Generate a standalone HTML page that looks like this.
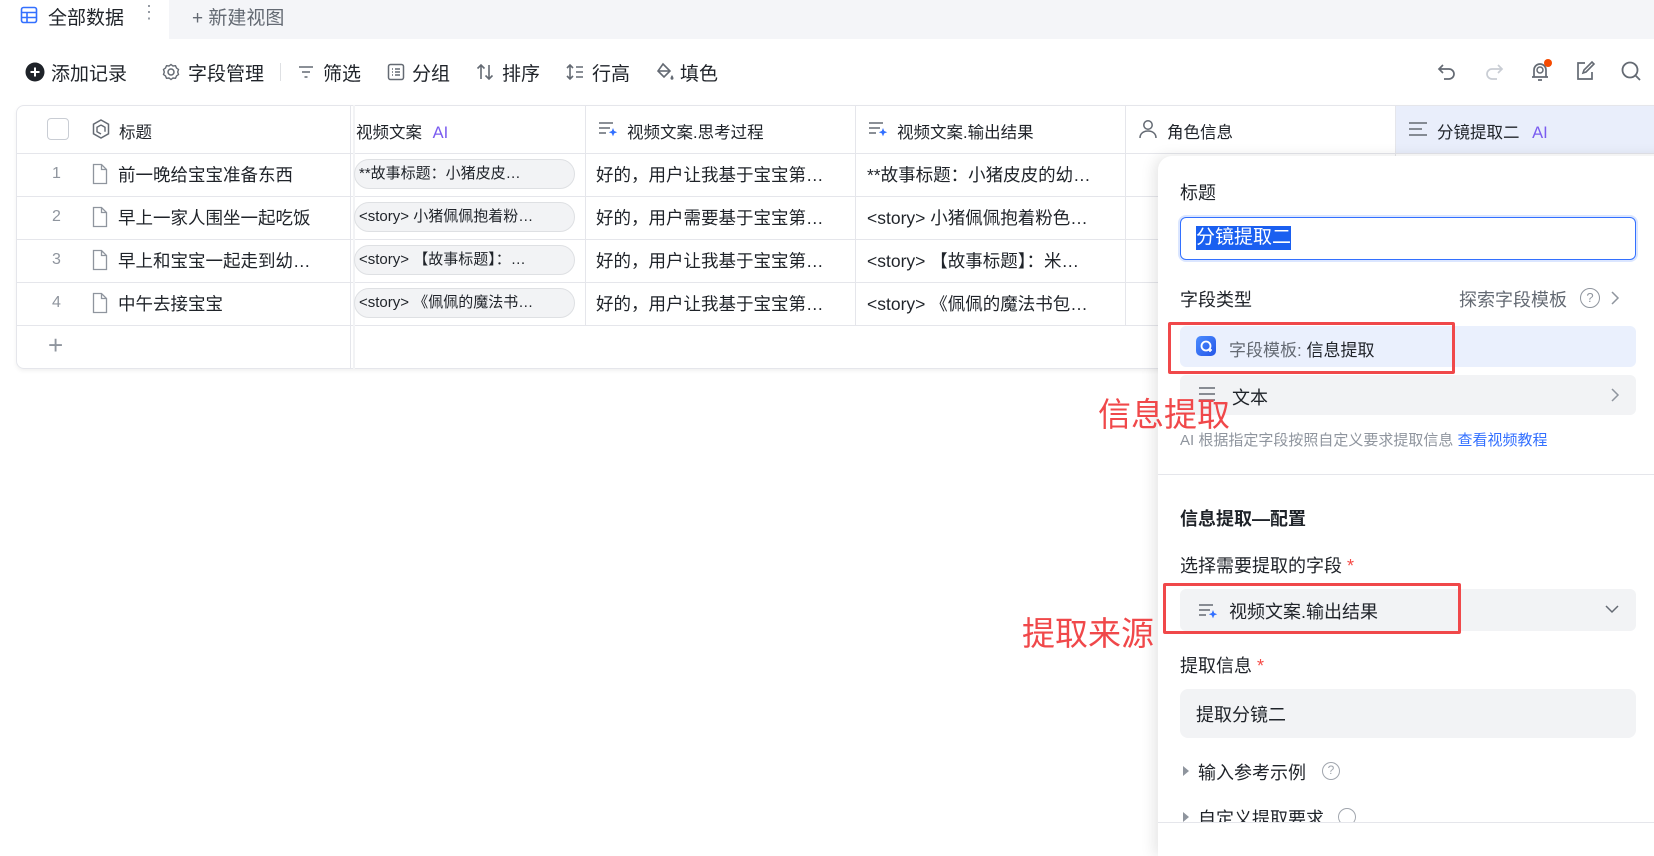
<!DOCTYPE html>
<html><head><meta charset="utf-8"><style>
*{box-sizing:border-box;margin:0;padding:0}
body{width:1654px;height:840px;overflow:hidden;background:#fff;font-family:"Liberation Sans","Noto Sans CJK SC",sans-serif;color:#1f2329;position:relative}
.a{position:absolute;white-space:nowrap}
svg{position:absolute}
.tb{font-size:19px;top:59px;color:#1f2329}
.hd{font-size:16.5px;top:119px;color:#1f2329}
.cell{font-size:17.5px;color:#1f2329}
.pill{position:absolute;left:354px;width:221px;height:30px;border:1px solid #dee0e3;background:#f2f3f5;border-radius:15px;font-size:15px;line-height:28px;padding-left:4px;overflow:hidden;white-space:nowrap}
.hl{position:absolute;left:16px;height:1px;background:#e5e6eb}
.vl{position:absolute;top:105px;width:1px;height:220px;background:#e5e6eb}
.lbl{font-size:18px;color:#1f2329}
</style></head><body>
<!-- tab bar -->
<div class="a" style="left:0;top:0;width:1654px;height:39px;background:#f4f5f8"></div>
<div class="a" style="left:0;top:0;width:169px;height:39px;background:#fff"></div>
<svg style="left:20px;top:6px" width="18" height="18" viewBox="0 0 18 18"><rect x="1.5" y="1.5" width="15" height="15" rx="2" fill="none" stroke="#3370ff" stroke-width="1.6"/><path d="M1.5 6.5h15M1.5 11.5h15M7 6.5v10" stroke="#3370ff" stroke-width="1.6"/></svg>
<div class="a" style="left:48px;top:3px;font-size:19px">全部数据</div>
<div class="a" style="left:140px;top:2px;font-size:18px;color:#8f959e">⋮</div>
<div class="a" style="left:192px;top:3px;font-size:19px;color:#646a73">+ 新建视图</div>
<!-- toolbar -->
<svg style="left:25px;top:62px" width="20" height="20" viewBox="0 0 20 20"><circle cx="10" cy="10" r="9.5" fill="#1f2329"/><path d="M10 5.5v9M5.5 10h9" stroke="#fff" stroke-width="2"/></svg>
<div class="a tb" style="left:51px">添加记录</div>
<svg style="left:162px;top:63px" width="18" height="18" viewBox="0 0 18 18"><circle cx="9" cy="9" r="3" fill="none" stroke="#646a73" stroke-width="1.5"/><path d="M9 1.5l2 1.5 2.5-.3 1 2.3 2 1.5-.8 2.5.8 2.5-2 1.5-1 2.3-2.5-.3-2 1.5-2-1.5-2.5.3-1-2.3-2-1.5.8-2.5-.8-2.5 2-1.5 1-2.3 2.5.3z" fill="none" stroke="#646a73" stroke-width="1.4"/></svg>
<div class="a tb" style="left:188px">字段管理</div>
<div class="a" style="left:280px;top:63px;width:1px;height:18px;background:#dee0e3"></div>
<svg style="left:297px;top:63px" width="18" height="18" viewBox="0 0 18 18"><path d="M2 4h14M5 9h8M7.5 14h3" stroke="#646a73" stroke-width="1.6"/></svg>
<div class="a tb" style="left:323px">筛选</div>
<svg style="left:387px;top:63px" width="18" height="18" viewBox="0 0 18 18"><rect x="1.5" y="1.5" width="15" height="15" rx="2" fill="none" stroke="#646a73" stroke-width="1.5"/><path d="M5 6h1M5 9h1M5 12h1M8 6h5M8 9h5M8 12h5" stroke="#646a73" stroke-width="1.5"/></svg>
<div class="a tb" style="left:412px">分组</div>
<svg style="left:475px;top:62px" width="20" height="20" viewBox="0 0 20 20"><path d="M6 17V3M2.5 6.5L6 3l3.5 3.5M14 3v14M10.5 13.5L14 17l3.5-3.5" fill="none" stroke="#646a73" stroke-width="1.6"/></svg>
<div class="a tb" style="left:502px">排序</div>
<svg style="left:565px;top:62px" width="20" height="20" viewBox="0 0 20 20"><path d="M5 3v14M2 6l3-3 3 3M2 14l3 3 3-3M11 5h7M11 10h7M11 15h7" fill="none" stroke="#646a73" stroke-width="1.6"/></svg>
<div class="a tb" style="left:592px">行高</div>
<svg style="left:654px;top:61px" width="22" height="22" viewBox="0 0 22 22"><path d="M9 3l7 7-6 6-6-6z" fill="none" stroke="#646a73" stroke-width="1.6"/><path d="M4 10h12" stroke="#646a73" stroke-width="1.6"/><path d="M18 14c1 1.5 1.5 2.5 1.5 3.2a1.5 1.5 0 01-3 0c0-.7.5-1.7 1.5-3.2z" fill="#646a73"/></svg>
<div class="a tb" style="left:680px">填色</div>
<!-- right icons -->
<svg style="left:1436px;top:61px" width="22" height="22" viewBox="0 0 22 22"><path d="M7 4L3 8l4 4M3 8h10a5 5 0 010 10H8" fill="none" stroke="#646a73" stroke-width="1.7"/></svg>
<svg style="left:1483px;top:61px" width="22" height="22" viewBox="0 0 22 22"><path d="M15 4l4 4-4 4M19 8H9a5 5 0 000 10h5" fill="none" stroke="#c9cdd4" stroke-width="1.7"/></svg>
<svg style="left:1528px;top:58px" width="26" height="26" viewBox="0 0 26 26"><path d="M6 19V12a6 6 0 0112 0v7M4 19h16M10 22h4" fill="none" stroke="#646a73" stroke-width="1.7"/><circle cx="12" cy="12" r="3" fill="none" stroke="#646a73" stroke-width="1.5"/><circle cx="20" cy="5" r="4" fill="#f54a00"/></svg>
<svg style="left:1574px;top:60px" width="22" height="22" viewBox="0 0 22 22"><path d="M11 3H4v16h14v-7" fill="none" stroke="#646a73" stroke-width="1.7"/><path d="M9 13l1-3 8-8 2 2-8 8z" fill="none" stroke="#646a73" stroke-width="1.6"/></svg>
<svg style="left:1620px;top:60px" width="22" height="22" viewBox="0 0 22 22"><circle cx="10" cy="10" r="7.5" fill="none" stroke="#646a73" stroke-width="1.8"/><path d="M15.5 15.5L20 20" stroke="#646a73" stroke-width="1.8"/></svg>
<!-- table -->
<div class="a" style="left:16px;top:105px;width:1650px;height:264px;border:1px solid #e5e6eb;border-radius:8px;box-shadow:0 2px 4px rgba(0,0,0,.06)"></div>
<div class="a" style="left:1395px;top:106px;width:259px;height:47px;background:#e9eefb"></div>
<div class="hl" style="top:153px;width:1638px"></div>
<div class="hl" style="top:196px;width:1638px"></div>
<div class="hl" style="top:239px;width:1638px"></div>
<div class="hl" style="top:282px;width:1638px"></div>
<div class="hl" style="top:325px;width:1638px"></div>
<div class="a" style="left:350px;top:105px;width:1px;height:264px;background:#e5e6eb"></div>
<div class="a" style="left:353px;top:105px;width:2px;height:264px;background:#f2f3f5"></div>
<div class="vl" style="left:585px"></div><div class="vl" style="left:855px"></div><div class="vl" style="left:1125px"></div><div class="vl" style="left:1395px"></div>
<div class="a" style="left:47px;top:118px;width:22px;height:22px;border:1.5px solid #c9cdd4;border-radius:4px"></div>
<svg style="left:92px;top:119px" width="18" height="20" viewBox="0 0 18 20"><path d="M9 1l7.5 4.2v9.6L9 19l-7.5-4.2V5.2z" fill="none" stroke="#646a73" stroke-width="1.5"/><path d="M9 6l4 2.3v4.4M9 6L5 8.3v4.4L9 15" fill="none" stroke="#646a73" stroke-width="1.4"/></svg>
<div class="a hd" style="left:119px">标题</div>
<div class="a hd" style="left:356px">视频文案 <span style="color:#7a5cf0;margin-left:6px">AI</span></div>
<svg style="left:598px;top:120px" width="20" height="18" viewBox="0 0 20 18"><path d="M1 3h14M1 8h11M1 13h7" stroke="#646a73" stroke-width="1.6"/><path d="M15 8l1.2 3 3 1.2-3 1.2-1.2 3-1.2-3-3-1.2 3-1.2z" fill="#3370ff"/></svg>
<div class="a hd" style="left:627px">视频文案.思考过程</div>
<svg style="left:868px;top:120px" width="20" height="18" viewBox="0 0 20 18"><path d="M1 3h14M1 8h11M1 13h7" stroke="#646a73" stroke-width="1.6"/><path d="M15 8l1.2 3 3 1.2-3 1.2-1.2 3-1.2-3-3-1.2 3-1.2z" fill="#3370ff"/></svg>
<div class="a hd" style="left:897px">视频文案.输出结果</div>
<svg style="left:1138px;top:119px" width="20" height="20" viewBox="0 0 20 20"><circle cx="10" cy="6" r="4.2" fill="none" stroke="#646a73" stroke-width="1.5"/><path d="M2 19c0-4.5 3.5-7 8-7s8 2.5 8 7" fill="none" stroke="#646a73" stroke-width="1.5"/></svg>
<div class="a hd" style="left:1167px">角色信息</div>
<svg style="left:1408px;top:121px" width="20" height="16" viewBox="0 0 20 16"><path d="M1 2h18M1 8h13M1 14h18" stroke="#646a73" stroke-width="1.6"/></svg>
<div class="a hd" style="left:1437px">分镜提取二 <span style="color:#7a5cf0;margin-left:8px">AI</span></div>
<!-- rows -->
<div class="a" style="left:52px;top:165px;font-size:16px;color:#8f959e">1</div>
<div class="a" style="left:52px;top:208px;font-size:16px;color:#8f959e">2</div>
<div class="a" style="left:52px;top:251px;font-size:16px;color:#8f959e">3</div>
<div class="a" style="left:52px;top:294px;font-size:16px;color:#8f959e">4</div>
<svg style="left:92px;top:163px" width="16" height="22" viewBox="0 0 16 22"><path d="M1.5 1.5h8l5 5v14h-13z M9.5 1.5v5h5" fill="none" stroke="#8f959e" stroke-width="1.3"/></svg>
<svg style="left:92px;top:206px" width="16" height="22" viewBox="0 0 16 22"><path d="M1.5 1.5h8l5 5v14h-13z M9.5 1.5v5h5" fill="none" stroke="#8f959e" stroke-width="1.3"/></svg>
<svg style="left:92px;top:249px" width="16" height="22" viewBox="0 0 16 22"><path d="M1.5 1.5h8l5 5v14h-13z M9.5 1.5v5h5" fill="none" stroke="#8f959e" stroke-width="1.3"/></svg>
<svg style="left:92px;top:292px" width="16" height="22" viewBox="0 0 16 22"><path d="M1.5 1.5h8l5 5v14h-13z M9.5 1.5v5h5" fill="none" stroke="#8f959e" stroke-width="1.3"/></svg>
<div class="a cell" style="left:118px;top:162px">前一晚给宝宝准备东西</div>
<div class="a cell" style="left:118px;top:205px">早上一家人围坐一起吃饭</div>
<div class="a cell" style="left:118px;top:248px">早上和宝宝一起走到幼…</div>
<div class="a cell" style="left:118px;top:291px">中午去接宝宝</div>
<div class="a" style="left:48px;top:330px;font-size:26px;color:#8f959e;font-weight:300">+</div>
<div class="pill" style="top:159px">**故事标题：小猪皮皮…</div>
<div class="pill" style="top:202px">&lt;story&gt; 小猪佩佩抱着粉…</div>
<div class="pill" style="top:245px">&lt;story&gt; 【故事标题】：…</div>
<div class="pill" style="top:288px">&lt;story&gt; 《佩佩的魔法书…</div>
<div class="a cell" style="left:596px;top:162px">好的，用户让我基于宝宝第…</div>
<div class="a cell" style="left:596px;top:205px">好的，用户需要基于宝宝第…</div>
<div class="a cell" style="left:596px;top:248px">好的，用户让我基于宝宝第…</div>
<div class="a cell" style="left:596px;top:291px">好的，用户让我基于宝宝第…</div>
<div class="a cell" style="left:867px;top:162px">**故事标题：小猪皮皮的幼…</div>
<div class="a cell" style="left:867px;top:205px">&lt;story&gt; 小猪佩佩抱着粉色…</div>
<div class="a cell" style="left:867px;top:248px">&lt;story&gt; 【故事标题】：米…</div>
<div class="a cell" style="left:867px;top:291px">&lt;story&gt; 《佩佩的魔法书包…</div>
<!-- panel -->
<div class="a" style="left:1158px;top:156px;width:520px;height:700px;background:#fff;border-radius:14px 0 0 0;box-shadow:-4px 0 14px rgba(0,0,0,.10)"></div>
<div class="a lbl" style="left:1180px;top:179px">标题</div>
<div class="a" style="left:1180px;top:217px;width:456px;height:43px;border:1.5px solid #3370ff;border-radius:6px;box-shadow:0 0 0 2px #dbe6ff"></div>
<div class="a" style="left:1196px;top:226px;font-size:19px;color:#fff;background:#1a5ff0;line-height:24px">分镜提取二</div>
<div class="a lbl" style="left:1180px;top:286px">字段类型</div>
<div class="a" style="left:1459px;top:286px;font-size:18px;color:#646a73">探索字段模板</div>
<div class="a" style="left:1580px;top:288px;width:20px;height:20px;border:1.5px solid #8f959e;border-radius:50%;font-size:13px;line-height:17px;text-align:center;color:#8f959e">?</div>
<svg style="left:1610px;top:291px" width="10" height="14" viewBox="0 0 10 14"><path d="M2 1l6 6-6 6" fill="none" stroke="#8f959e" stroke-width="1.5"/></svg>
<div class="a" style="left:1180px;top:326px;width:456px;height:41px;background:#eaf0fd;border-radius:6px"></div>
<div class="a" style="left:1196px;top:336px;width:20px;height:20px;border-radius:5px;background:linear-gradient(135deg,#4b8cff,#2456e8)"></div>
<svg style="left:1199px;top:339px" width="14" height="14" viewBox="0 0 14 14"><circle cx="7" cy="7" r="4.5" fill="none" stroke="#fff" stroke-width="1.8"/><path d="M9 11h4M11 9v4" stroke="#fff" stroke-width="1.5"/></svg>
<div class="a" style="left:1229px;top:336px;font-size:17px;color:#646a73">字段模板: <span style="color:#1f2329">信息提取</span></div>
<div class="a" style="left:1180px;top:375px;width:456px;height:40px;background:#f2f3f5;border-radius:6px"></div>
<svg style="left:1198px;top:386px" width="18" height="16" viewBox="0 0 18 16"><path d="M1 2h16M1 8h16M1 14h16" stroke="#646a73" stroke-width="1.6"/></svg>
<div class="a lbl" style="left:1232px;top:384px">文本</div>
<svg style="left:1610px;top:388px" width="10" height="14" viewBox="0 0 10 14"><path d="M2 1l6 6-6 6" fill="none" stroke="#8f959e" stroke-width="1.5"/></svg>
<div class="a" style="left:1180px;top:429px;font-size:15px;color:#8f959e">AI 根据指定字段按照自定义要求提取信息 <span style="color:#3370ff">查看视频教程</span></div>
<div class="a" style="left:1158px;top:474px;width:496px;height:1px;background:#e5e6eb"></div>
<div class="a" style="left:1180px;top:505px;font-size:18px;font-weight:bold">信息提取—配置</div>
<div class="a lbl" style="left:1180px;top:552px">选择需要提取的字段 <span style="color:#f54a45">*</span></div>
<div class="a" style="left:1180px;top:589px;width:456px;height:42px;background:#f2f3f5;border-radius:6px"></div>
<svg style="left:1198px;top:602px" width="20" height="18" viewBox="0 0 20 18"><path d="M1 3h14M1 8h11M1 13h7" stroke="#646a73" stroke-width="1.6"/><path d="M15 8l1.2 3 3 1.2-3 1.2-1.2 3-1.2-3-3-1.2 3-1.2z" fill="#3370ff"/></svg>
<div class="a lbl" style="left:1229px;top:598px">视频文案.输出结果</div>
<svg style="left:1605px;top:604px" width="14" height="10" viewBox="0 0 14 10"><path d="M1 2l6 6 6-6" fill="none" stroke="#646a73" stroke-width="1.5"/></svg>
<div class="a lbl" style="left:1180px;top:652px">提取信息 <span style="color:#f54a45">*</span></div>
<div class="a" style="left:1180px;top:689px;width:456px;height:49px;background:#f2f3f5;border-radius:8px"></div>
<div class="a lbl" style="left:1196px;top:701px">提取分镜二</div>
<svg style="left:1183px;top:766px" width="6" height="10" viewBox="0 0 6 10"><path d="M0 0l6 5-6 5z" fill="#8f959e"/></svg>
<div class="a lbl" style="left:1198px;top:759px">输入参考示例</div>
<div class="a" style="left:1322px;top:762px;width:18px;height:18px;border:1.5px solid #a0a5ad;border-radius:50%;font-size:12px;line-height:15px;text-align:center;color:#a0a5ad">?</div>
<div class="a" style="left:1158px;top:801px;width:496px;height:21px;overflow:hidden">
<svg style="left:25px;top:11px" width="6" height="10" viewBox="0 0 6 10"><path d="M0 0l6 5-6 5z" fill="#8f959e"/></svg>
<div class="a lbl" style="left:40px;top:4px">自定义提取要求</div>
<div class="a" style="left:180px;top:7px;width:18px;height:18px;border:1.5px solid #a0a5ad;border-radius:50%"></div>
</div>
<div class="a" style="left:1158px;top:822px;width:496px;height:1px;background:#e5e6eb"></div>
<!-- annotations -->
<div class="a" style="left:1168px;top:322px;width:287px;height:52px;border:3px solid #f0484a;border-radius:2px"></div>
<div class="a" style="left:1163px;top:583px;width:298px;height:51px;border:3px solid #f0484a;border-radius:2px"></div>
<div class="a" style="left:1098px;top:388px;font-size:33px;color:#f0484a">信息提取</div>
<div class="a" style="left:1022px;top:607px;font-size:33px;color:#f0484a">提取来源</div>
</body></html>
